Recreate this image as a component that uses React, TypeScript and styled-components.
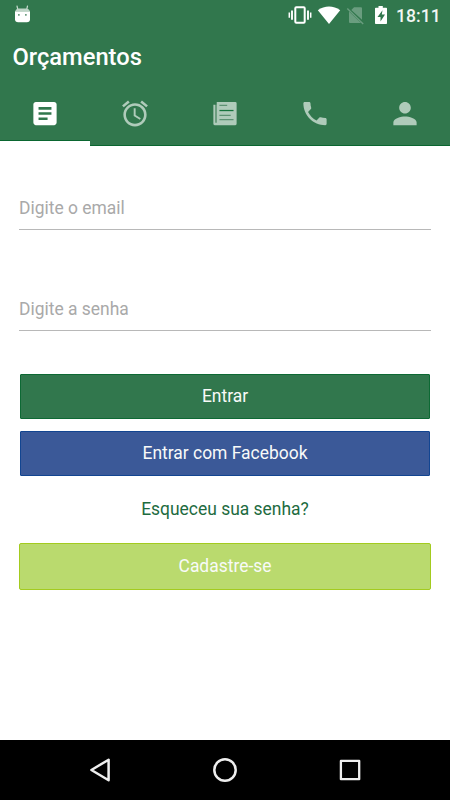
import React from "react";
import styled, { createGlobalStyle } from "styled-components";

const Global = createGlobalStyle`
  * { box-sizing: border-box; }
  body { margin: 0; background: #fff; font-family: Roboto, "Liberation Sans", sans-serif; }
`;

const Screen = styled.div`
  width: 450px;
  height: 800px;
  display: flex;
  flex-direction: column;
  background: #fff;
  overflow: hidden;
`;

const Header = styled.header`
  height: 146px;
  background: #31774d;
  display: flex;
  flex-direction: column;
`;

const StatusBar = styled.div`
  height: 30px;
  padding: 0 10px 0 13px;
  display: flex;
  align-items: center;
  justify-content: space-between;
`;

const StatusIcons = styled.div`
  display: flex;
  align-items: center;
`;

const Glyph = styled.svg<{ $gap?: number }>`
  flex: none;
  margin-right: ${(p) => p.$gap ?? 0}px;
`;

const Clock = styled.span`
  width: 44px;
  margin-left: 7px;
  padding-top: 2px;
  font-size: 17.6px;
  line-height: 22px;
  font-weight: 500;
  color: #f2f6f3;
  white-space: nowrap;
`;

const Title = styled.h1`
  margin: 0;
  height: 52px;
  padding-left: 12.5px;
  line-height: 55px;
  font-size: 23.7px;
  font-weight: 500;
  color: #fff;
`;

const Tabs = styled.nav`
  height: 64px;
  display: grid;
  grid-template-columns: repeat(5, 90px);
`;

const Tab = styled.button<{ $active?: boolean }>`
  height: 64px;
  margin: 0;
  padding: 16px 0 0;
  border: 0;
  border-bottom: ${(p) => (p.$active ? "5px solid #fff" : "1px solid #0a6630")};
  box-shadow: ${(p) => (p.$active ? "inset 0 -1px #0a6630" : "none")};
  background: none;
  color: ${(p) => (p.$active ? "#fff" : "#afcbba")};
  display: flex;
  justify-content: center;
`;

const Form = styled.main`
  flex: 1;
  padding: 38px 19px 0;
  display: flex;
  flex-direction: column;
`;

const Field = styled.input`
  height: 46px;
  margin-bottom: 55px;
  padding: 3px 0 0;
  border: 0;
  border-bottom: 1px solid #b8b8b8;
  outline: 0;
  background: none;
  font: 400 17.45px Roboto, sans-serif;
  &::placeholder { color: #a9a9a9; opacity: 1; }
`;

const Button = styled.button<{ $bg: string; $edge: string; $wide?: boolean }>`
  height: ${(p) => (p.$wide ? 47 : 45)}px;
  margin: ${(p) => (p.$wide ? "0" : "0 1px 12px")};
  padding: 0 0 1px;
  border: 1px solid ${(p) => p.$edge};
  border-radius: ${(p) => (p.$wide ? 2 : 1)}px;
  background: ${(p) => p.$bg};
  color: #f8faf8;
  font: 400 17.45px Roboto, sans-serif;
`;

const Actions = styled.div`
  margin-top: -12px;
  display: flex;
  flex-direction: column;
`;

const ForgotLink = styled.a`
  height: 55px;
  line-height: 43px;
  text-align: center;
  color: #1d6b3f;
  font-size: 17.45px;
`;

const NavBar = styled.footer`
  height: 60px;
  background: #000;
  display: grid;
  grid-template-columns: repeat(3, 125px);
  justify-content: center;
  align-items: center;
  justify-items: center;
`;

const TabIcon = ({ children }: { children: React.ReactNode }) => (
  <svg width="32" height="31" viewBox="-0.38 0 24.77 24" fill="currentColor">{children}</svg>
);

export default function App() {
  return (
    <>
      <Global />
      <Screen>
        <Header>
          <StatusBar>
            <Glyph width="18" height="20" viewBox="0 0 18 20">
              <path d="M5 5.500 4 1M13.500 5.500l1-4.500" stroke="#c6dacd" strokeWidth="1.200" strokeLinecap="round" />
              <path d="M2 6.300h15v8.200q0 2.500-3.200 2.700H5.200Q2 17 2 14.500z" fill="#fff" />
              <path d="M2 6.500Q2.500 4 5.500 3.500h8q3 .5 3.500 3z" fill="#bfd5c7" />
              <path d="M5 9h1.700v1.700H5zM12 9h1.700v1.700H12z" fill="#6d9d80" />
            </Glyph>
            <StatusIcons>
              <Glyph $gap={5} width="24" height="20" viewBox="0 0 24 20" fill="none" stroke="#fff">
                <rect x="7.300" y="2.300" width="9.400" height="15.400" rx="1" strokeWidth="2" />
                <path d="M4 5.500v9.200M20 5.500v9.200" strokeWidth="1.900" />
                <path d="M1.300 7.500v5.200M22.700 7.500v5.200" strokeWidth="1.500" />
              </Glyph>
              <Glyph $gap={5} width="24" height="20" viewBox="0 0 24 20">
                <path d="M.8 5.200C7.500.2 16.500.2 23.200 5.200L12 19z" fill="#fff" />
              </Glyph>
              <Glyph width="28" height="20" viewBox="0 0 28 20">
                <path d="M8 2.300h7q1 0 1 1v11.500L5.300 5zM3 6.500 15 18H4q-1 0-1-1z" fill="#6a9d7f" />
                <path d="M1.300 3.500 17.200 19" stroke="#6a9d7f" strokeWidth="1.400" />
              </Glyph>
              <Glyph width="15" height="20" viewBox="0 0 15 20">
                <path d="M4.500.9h4.300v1.800h3.400q.8 0 .8.8v14.700q0 .8-.8.8H1.800q-.8 0-.8-.8V3.500q0-.8.8-.8h2.700z" fill="#fff" />
                <path d="M8.500 5.200 3.500 12h3v4.500l4.500-7H7.800z" fill="#31774d" />
              </Glyph>
              <Clock>18:11</Clock>
            </StatusIcons>
          </StatusBar>
          <Title>Orçamentos</Title>
          <Tabs>
            <Tab $active aria-label="Orçamentos">
              <TabIcon><path d="M19 3H5c-1.100 0-2 .9-2 2v14c0 1.100.9 2 2 2h14c1.100 0 2-.9 2-2V5c0-1.100-.9-2-2-2zm-5 14H7v-2h7v2zm3-4H7v-2h10v2zm0-4H7V7h10v2z" /></TabIcon>
            </Tab>
            <Tab aria-label="Alarme">
              <TabIcon><path d="M22 5.720l-4.600-3.860-1.290 1.530 4.600 3.860L22 5.720zM7.880 3.390L6.600 1.860 2 5.710l1.290 1.530 4.590-3.850zM12.500 8H11v6l4.750 2.850.75-1.230-4-2.370V8zM12 4c-4.970 0-9 4.030-9 9s4.020 9 9 9a9 9 0 0 0 0-18zm0 16c-3.870 0-7-3.130-7-7s3.130-7 7-7 7 3.130 7 7-3.130 7-7 7z" /></TabIcon>
            </Tab>
            <Tab aria-label="Notícias">
              <TabIcon>
                <path d="M5.600 3H20q1 0 1 1v16q0 1-1 1H4q-1 0-1-1V5.300h1.500V19h1.100z" />
                <path d="M4.500 5.500V19h1.100V5z" fill="#75a388" />
                <path d="M7.700 5.200h6v1h-6zM7.700 12.900h8.700v1H7.700zM7.700 16.200h10.900v1H7.700z" fill="#5d9273" />
                <path d="M7.700 9.200h10.900v1H7.700z" fill="#17733d" />
              </TabIcon>
            </Tab>
            <Tab aria-label="Telefone">
              <TabIcon><path d="M6.620 10.790c1.440 2.830 3.760 5.140 6.590 6.590l2.200-2.200c.27-.27.67-.36 1.020-.24 1.120.37 2.330.57 3.570.57.550 0 1 .45 1 1V20c0 .55-.45 1-1 1C10.610 21 3 13.390 3 4c0-.55.45-1 1-1h3.500c.55 0 1 .45 1 1 0 1.250.2 2.450.57 3.570.11.350.03.740-.25 1.020l-2.200 2.200z" /></TabIcon>
            </Tab>
            <Tab aria-label="Perfil">
              <TabIcon><path d="M12 12c2.480 0 4.500-2.020 4.500-4.500S14.480 3 12 3 7.500 5.020 7.500 7.500 9.520 12 12 12zm0 2.250c-3 0-9 1.510-9 4.500V21h18v-2.250c0-2.990-6-4.500-9-4.500z" /></TabIcon>
            </Tab>
          </Tabs>
        </Header>
        <Form>
          <Field type="email" placeholder="Digite o email" />
          <Field type="password" placeholder="Digite a senha" />
          <Actions>
            <Button $bg="#31774d" $edge="#0d6934">Entrar</Button>
            <Button $bg="#3b5998" $edge="#124591">Entrar com Facebook</Button>
            <ForgotLink>Esqueceu sua senha?</ForgotLink>
            <Button $wide $bg="#bada6e" $edge="#a3cb1f">Cadastre-se</Button>
          </Actions>
        </Form>
        <NavBar>
          <svg width="30" height="30" viewBox="0 0 30 30" fill="none" stroke="#eee" strokeWidth="2.500" strokeLinejoin="round">
            <path d="M23.600 4.700v20.600L6.400 15z" />
          </svg>
          <svg width="30" height="30" viewBox="0 0 30 30" fill="none" stroke="#eee" strokeWidth="2.500">
            <circle cx="15" cy="15" r="10.700" />
          </svg>
          <svg width="30" height="30" viewBox="0 0 30 30" fill="none" stroke="#eee" strokeWidth="2.300" strokeLinejoin="round">
            <rect x="5.900" y="5.900" width="18.300" height="18.300" />
          </svg>
        </NavBar>
      </Screen>
    </>
  );
}
